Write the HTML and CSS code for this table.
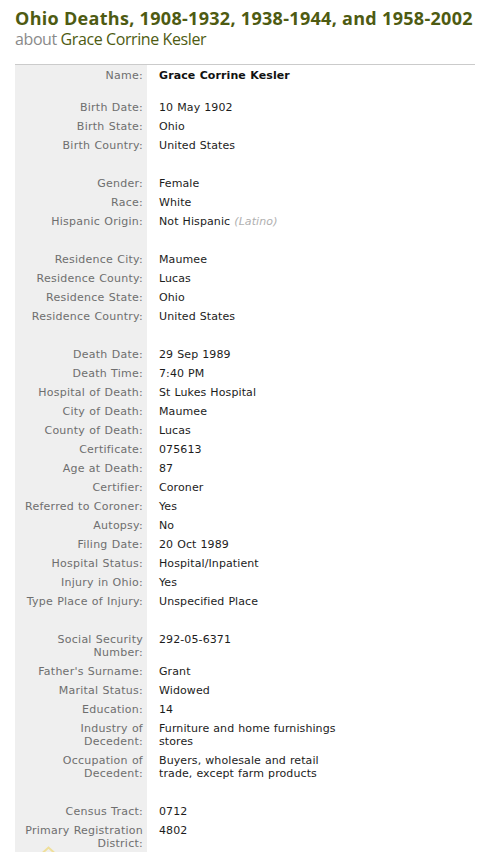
FILE: index.html
```html
<!DOCTYPE html>
<html>
<head>
	<title>Ohio Deaths - Grace Corrine Kesler</title>
	<link rel="stylesheet" href="styles.css">
</head>
<body>

	<div class="record">
		<h1 class="title">Ohio Deaths, 1908-1932, 1938-1944, and 1958-2002</h1>
		<div class="subtitle">about <span class="who">Grace Corrine Kesler</span></div>

		<table class="facts">
			<tr><th>Name:</th><td><b>Grace Corrine Kesler</b></td></tr>
			<tr class="gap first"><th></th><td></td></tr>

			<tr><th>Birth Date:</th><td>10 May 1902</td></tr>
			<tr><th>Birth State:</th><td>Ohio</td></tr>
			<tr><th>Birth Country:</th><td>United States</td></tr>
			<tr class="gap"><th></th><td></td></tr>

			<tr><th>Gender:</th><td>Female</td></tr>
			<tr><th>Race:</th><td>White</td></tr>
			<tr><th>Hispanic Origin:</th><td>Not Hispanic <i class="note">(Latino)</i></td></tr>
			<tr class="gap"><th></th><td></td></tr>

			<tr><th>Residence City:</th><td>Maumee</td></tr>
			<tr><th>Residence County:</th><td>Lucas</td></tr>
			<tr><th>Residence State:</th><td>Ohio</td></tr>
			<tr><th>Residence Country:</th><td>United States</td></tr>
			<tr class="gap"><th></th><td></td></tr>

			<tr><th>Death Date:</th><td>29 Sep 1989</td></tr>
			<tr><th>Death Time:</th><td>7:40 PM</td></tr>
			<tr><th>Hospital of Death:</th><td>St Lukes Hospital</td></tr>
			<tr><th>City of Death:</th><td>Maumee</td></tr>
			<tr><th>County of Death:</th><td>Lucas</td></tr>
			<tr><th>Certificate:</th><td>075613</td></tr>
			<tr><th>Age at Death:</th><td>87</td></tr>
			<tr><th>Certifier:</th><td>Coroner</td></tr>
			<tr><th>Referred to Coroner:</th><td>Yes</td></tr>
			<tr><th>Autopsy:</th><td>No</td></tr>
			<tr><th>Filing Date:</th><td>20 Oct 1989</td></tr>
			<tr><th>Hospital Status:</th><td>Hospital/Inpatient</td></tr>
			<tr><th>Injury in Ohio:</th><td>Yes</td></tr>
			<tr><th>Type Place of Injury:</th><td>Unspecified Place</td></tr>
			<tr class="gap"><th></th><td></td></tr>

			<tr><th>Social Security Number:</th><td>292-05-6371</td></tr>
			<tr><th>Father's Surname:</th><td>Grant</td></tr>
			<tr><th>Marital Status:</th><td>Widowed</td></tr>
			<tr><th>Education:</th><td>14</td></tr>
			<tr><th>Industry of Decedent:</th><td><span class="val">Furniture and home furnishings stores</span></td></tr>
			<tr><th>Occupation of Decedent:</th><td><span class="val">Buyers, wholesale and retail trade, except farm products</span></td></tr>
			<tr class="gap"><th></th><td></td></tr>

			<tr><th>Census Tract:</th><td>0712</td></tr>
			<tr class="last">
				<th>Primary Registration District:
					<svg class="caret" width="13" height="7" viewBox="0 0 13 7"><polyline points="1,6.5 6.5,1.5 12,6.5" fill="none" stroke="#efdf9a" stroke-width="2"/></svg>
				</th>
				<td>4802</td>
			</tr>
		</table>
	</div>

</body>
</html>
```

FILE: styles.css
```css
	body{
		margin: 0;
		padding: 8px 14px 0 15px;
		font-family: "DejaVu Sans", Verdana, sans-serif;
		font-size: 11px;
		color: #1c1c1c;
		background: #fff;
	}

	.record{
		width: 460px;
	}

	.title{
		margin: 0;
		font-family: "Open Sans", sans-serif;
		font-size: 18px;
		font-weight: bold;
		letter-spacing: 0.3px;
		line-height: 21px;
		color: #4e5b12;
		white-space: nowrap;
	}

	.subtitle{
		font-family: "Open Sans", sans-serif;
		font-size: 16px;
		letter-spacing: -0.4px;
		line-height: 21px;
		color: #8a8a8a;
	}

	.who{
		color: #4e5b12;
	}

	.facts{
		width: 100%;
		margin-top: 14px;
		border-top: 1px solid #cbcbcb;
		border-collapse: collapse;
		border-spacing: 0;
		word-spacing: 0.4px;
	}

	.facts th{
		width: 120px;
		padding: 4px 4px 2px 8px;
		background-color: #efefef;
		color: #6e6e6e;
		font-weight: normal;
		text-align: right;
		vertical-align: top;
		line-height: 13px;
		letter-spacing: 0.25px;
	}

	.facts td{
		padding: 4px 0 2px 12px;
		vertical-align: top;
		line-height: 13px;
		letter-spacing: 0.1px;
	}

	.facts b{
		color: #111;
	}

	.val{
		display: block;
		max-width: 190px;
	}

	.note{
		color: #b0b0b0;
	}

	.gap th, .gap td{
		height: 13px;
	}

	.gap.first th, .gap.first td{
		height: 7px;
	}

	.last th{
		position: relative;
	}

	.caret{
		position: absolute;
		left: 27px;
		bottom: -1px;
	}
```
